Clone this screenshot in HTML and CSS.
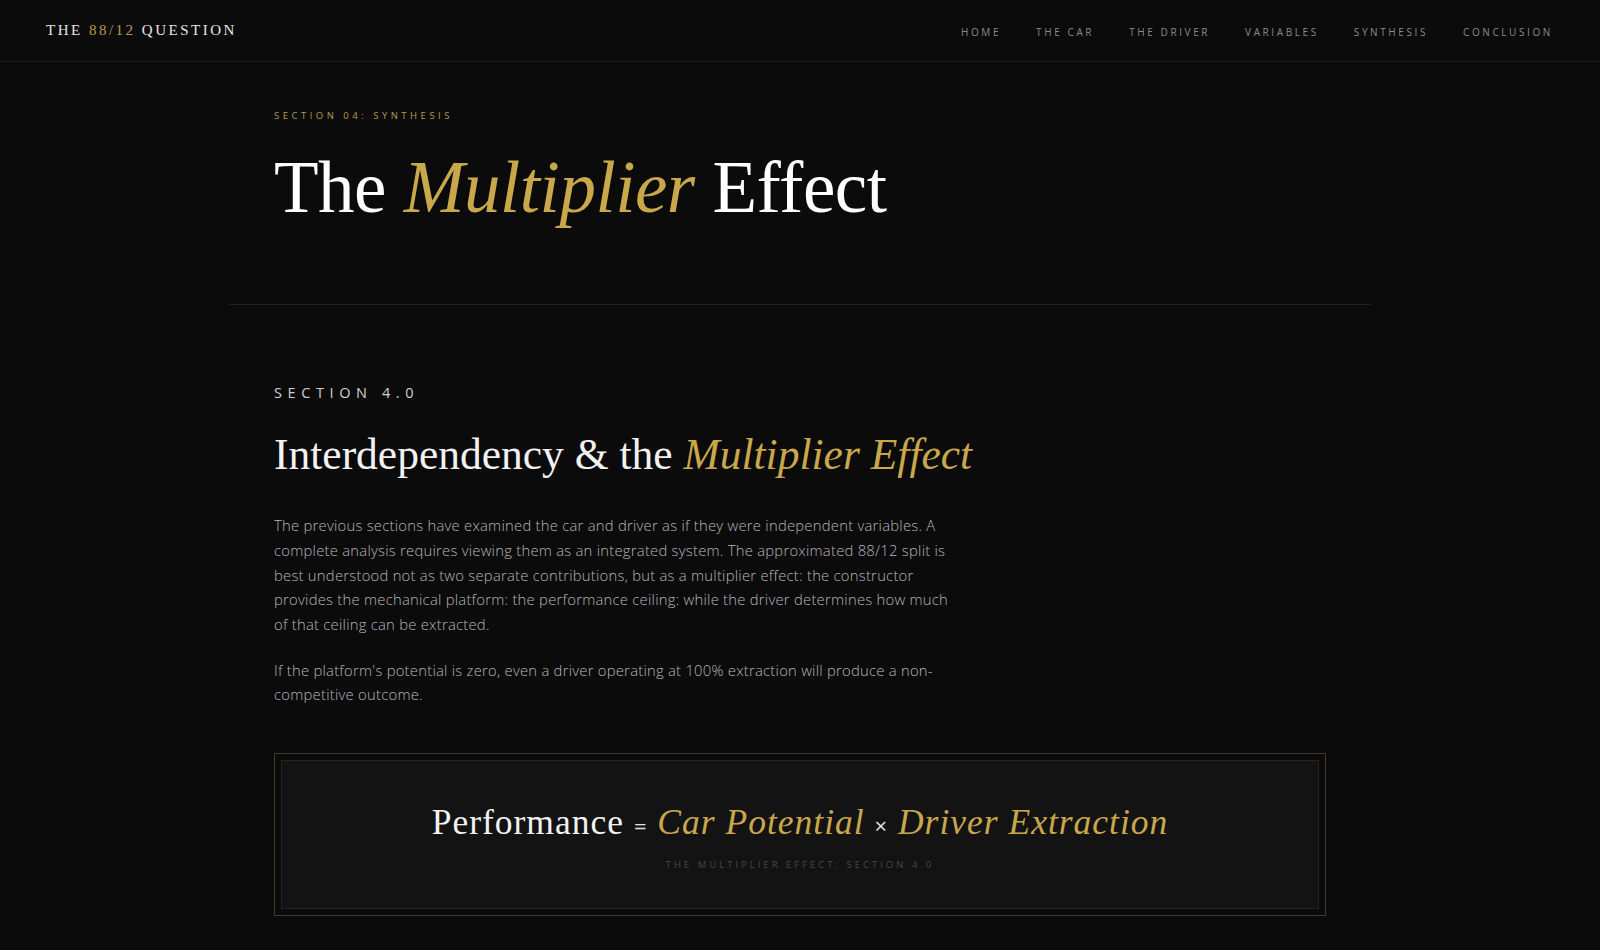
FILE: index.html
```html
<!DOCTYPE html>
<html lang="en">
<head>
<meta charset="utf-8">
<title>The 88/12 Question — The Multiplier Effect</title>
<link rel="stylesheet" href="styles.css">
</head>
<body>
<header class="topbar">
  <div class="logo">THE <span class="gold">88/12</span> QUESTION</div>
  <nav class="nav">
    <a href="#">HOME</a>
    <a href="#">THE CAR</a>
    <a href="#">THE DRIVER</a>
    <a href="#">VARIABLES</a>
    <a href="#">SYNTHESIS</a>
    <a href="#">CONCLUSION</a>
  </nav>
</header>
<main class="container">
  <section class="hero">
    <div class="eyebrow">SECTION 04: SYNTHESIS</div>
    <h1 class="title">The <em>Multiplier</em> Effect</h1>
  </section>
  <section class="content">
    <div class="section-label">SECTION 4.0</div>
    <h2 class="heading">Interdependency &amp; the <em>Multiplier Effect</em></h2>
    <p class="body">The previous sections have examined the car and driver as if they were independent variables. A complete analysis requires viewing them as an integrated system. The approximated 88/12 split is best understood not as two separate contributions, but as a multiplier effect: the constructor provides the mechanical platform: the performance ceiling: while the driver determines how much of that ceiling can be extracted.</p>
    <p class="body">If the platform's potential is zero, even a driver operating at 100% extraction will produce a non-competitive outcome.</p>
    <div class="formula-box">
      <div class="formula-inner">
        <div class="formula">Performance <span class="op">=</span> <em>Car Potential</em> <span class="op times">×</span> <em>Driver Extraction</em></div>
        <div class="caption">THE MULTIPLIER EFFECT: SECTION 4.0</div>
      </div>
    </div>
  </section>
</main>
</body>
</html>
```
FILE: styles.css
```css
* { box-sizing: border-box; }
html, body { margin: 0; padding: 0; }
body {
  background: #0b0b0b;
  color: #e8e8e8;
  font-family: "Open Sans", "Liberation Sans", sans-serif;
  height: 950px;
  overflow: hidden;
}
.gold { color: #b8994a; }
em { font-style: italic; color: #c9a84c; }

.topbar {
  height: 62px;
  border-bottom: 1px solid #1c1c1c;
  display: flex;
  align-items: center;
  justify-content: space-between;
  padding: 0 47px 0 46px;
}
.logo {
  font-family: "Liberation Serif", serif;
  font-size: 15px;
  letter-spacing: 2.5px;
  color: #e6e6e6;
  margin-top: 0;
}
.nav { display: flex; gap: 35px; }
.nav a {
  font-family: "Open Sans", sans-serif;
  font-size: 10px;
  letter-spacing: 2.6px;
  color: #8a8a8a;
  text-decoration: none;
  margin-top: 2px;
}

.container {
  width: 1142px;
  margin: 0 auto;
}
.hero {
  padding: 47px 45px 0;
  height: 243px;
  border-bottom: 1px solid #232323;
}
.eyebrow {
  font-size: 9.5px;
  letter-spacing: 3.5px;
  color: #b8994a;
  font-weight: 500;
}
.title {
  font-family: "Liberation Serif", serif;
  font-weight: normal;
  font-size: 73px;
  line-height: 1;
  margin: 29px 0 0;
  color: #ffffff;
  letter-spacing: -0.5px;
}

.content { padding: 78px 45px 0; }
.section-label {
  font-size: 14.5px;
  letter-spacing: 5.6px;
  color: #d0d0d0;
}
.heading {
  font-family: "Liberation Serif", serif;
  font-weight: normal;
  font-size: 43.5px;
  line-height: 1.2;
  margin: 26px 0 33px;
  color: #f2f2f2;
}
.body {
  font-size: 14.8px;
  font-weight: 300;
  letter-spacing: 0.25px;
  line-height: 24.7px;
  color: #b6b6b6;
  max-width: 686px;
  margin: 0 0 21px;
}
.formula-box {
  margin-top: 46px;
  border: 1px solid #433b25;
  padding: 6px;
  height: 163px;
}
.formula-inner {
  height: 100%;
  border: 1px solid #242424;
  background: #131313;
  display: flex;
  flex-direction: column;
  align-items: center;
  padding-top: 40px;
}
.formula {
  font-family: "Liberation Serif", serif;
  font-size: 35.5px;
  letter-spacing: 1px;
  color: #f2f2f2;
}
.formula em { color: #c9a84c; }
.op {
  font-family: "Open Sans", sans-serif;
  font-size: 22px;
  color: #e0e0e0;
}
.caption {
  margin-top: 15px;
  font-size: 9.5px;
  letter-spacing: 3px;
  color: #474747;
}
```
